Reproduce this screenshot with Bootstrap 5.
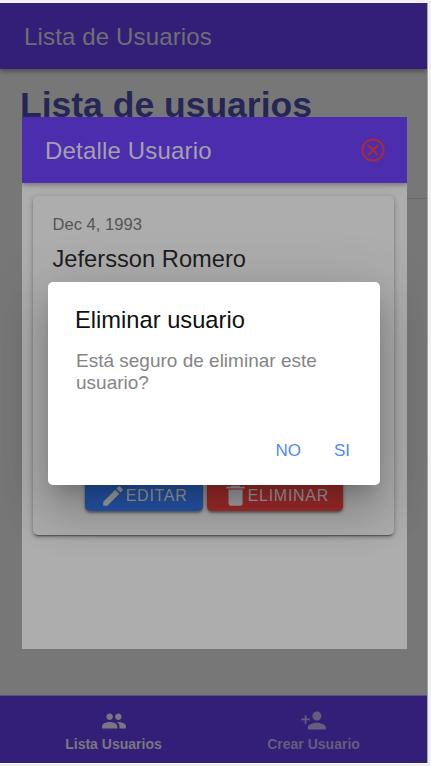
<!DOCTYPE html>
<html lang="es">
<head>
<meta charset="utf-8">
<meta name="viewport" content="width=device-width, initial-scale=1">
<title>Lista de Usuarios</title>
<link href="https://cdn.jsdelivr.net/npm/bootstrap@5.3.0/dist/css/bootstrap.min.css" rel="stylesheet">
<style>
html,body{height:766px;overflow:hidden}
body{background:#f1f1f2;font-family:"Liberation Sans",Arial,sans-serif;line-height:1}
.device{width:428px;height:760px;margin-top:3px;background:#777;overflow:hidden;border-right:1px solid #a3a3a8}
.base-line{height:3px;background:#f0edf5;border-top:1px solid #fff;width:428px}
.app-bar{height:66px;background:#341f78;color:#706e74;padding:1px 24px 0;font-size:24px;letter-spacing:.15px;box-shadow:0 2px 5px rgba(0,0,0,.38);flex:none}
.page-title{font-size:35.5px;font-weight:700;color:#262656;line-height:42px;margin:15px 0 0 20px;white-space:nowrap}
.rule{margin:72px 0 0 30px;border-top:1px solid #686868}
.tab-bar{height:68px;background:#341f78;border-top:1px solid #5b5180;flex:none}
.tab-item{width:200px;color:#7a7780;font-size:14px;font-weight:700;letter-spacing:.01px;padding-top:12px}
.tab-item.idle{color:#655d7c}
.tab-item svg{width:26px;height:26px;margin-bottom:3px}
.tab-item.idle svg{width:27px;height:27px;margin:-1px 0 3px}
.detail{left:22px;top:114px;width:385px;height:532px;background:#adadad;overflow:hidden}
.detail .detail-bar{height:66px;background:#4c2dae;color:#a4a1ac;padding:1px 20px 0 23px;font-size:24px;letter-spacing:.18px;box-shadow:0 2px 5px rgba(0,0,0,.32);flex:none}
.detail-bar svg{width:26px;height:26px;margin:-2px 1px 0 0}
.user-card{margin:13px 13px 0 11px;height:339px;border-radius:5px;background:#adadad;box-shadow:0 3px 1px -2px rgba(0,0,0,.3),0 2px 3px rgba(0,0,0,.22),0 1px 6px rgba(0,0,0,.2);padding:20px 19px 24px 19.500px}
.born{font-size:16.6px;line-height:20px;color:#555;margin-top:-1px}
.user-name{font-size:23.7px;line-height:28px;color:#1e1e1e;margin-top:10px;margin-bottom:0;font-weight:400}
.action{height:43px;border-radius:5px;padding:12px 12px 0 15px;font-size:16px;letter-spacing:.7px;color:#a4a4a6!important;border:0;box-shadow:0 2px 2px rgba(0,0,0,.28),0 1px 4px rgba(0,0,0,.3);line-height:1}
.action svg{width:26px;height:26px;flex:none}
.edit{background:#2657ac!important;width:118px}
.remove{background:#a32c2c!important;width:136px}
.confirm{left:47.500px;top:278.500px;width:332px;height:203px;border-radius:5px;background:#fff;box-shadow:0 13px 18px -8px rgba(0,0,0,.2),0 29px 45px 4px rgba(0,0,0,.14),0 11px 55px 10px rgba(0,0,0,.12);padding:24px 27.500px 0}
.confirm h2{font-size:23.7px;line-height:28px;margin:0;color:#111;font-weight:400}
.confirm p{font-size:19px;line-height:22px;margin:16.400px 0 0 1px;color:#858585}
.confirm .choice{font-size:17px;line-height:20px;color:#5089f8;padding:0;border:0}
.choices{gap:33px;margin-top:47px;padding-right:2px}
</style>
</head>
<body>
<div class="device position-relative d-flex flex-column">
  <header class="app-bar d-flex align-items-center">Lista de Usuarios</header>
  <main class="flex-grow-1">
    <h1 class="page-title">Lista de usuarios</h1>
    <div class="rule"></div>
  </main>
  <nav class="tab-bar d-flex justify-content-center">
    <div class="tab-item d-flex flex-column align-items-center">
      <svg viewBox="0 0 24 24" fill="currentColor"><path d="M16 11c1.66 0 2.99-1.34 2.99-3S17.66 5 16 5s-3 1.34-3 3 1.34 3 3 3zm-8 0c1.66 0 2.99-1.34 2.99-3S9.66 5 8 5 5 6.34 5 8s1.34 3 3 3zm0 2c-2.33 0-7 1.17-7 3.5V19h14v-2.500C15 14.170 10.330 13 8 13zm8 0c-.29 0-.62.020-.97.050C16.190 13.890 17 15.020 17 16.500V19h6v-2.500c0-2.330-4.670-3.500-7-3.500z"/></svg>
      <span>Lista Usuarios</span>
    </div>
    <div class="tab-item idle d-flex flex-column align-items-center">
      <svg viewBox="0 0 24 24" fill="currentColor"><path d="M15 12c2.210 0 4-1.790 4-4s-1.790-4-4-4-4 1.790-4 4 1.790 4 4 4zM5.700 10.300V7.300H4.200v3H1.200v1.500h3v3h1.500v-3h3v-1.500zM15 14c-2.670 0-8 1.340-8 4v2h16v-2c0-2.660-5.330-4-8-4z"/></svg>
      <span>Crear Usuario</span>
    </div>
  </nav>

  <section class="detail position-absolute d-flex flex-column">
    <div class="detail-bar d-flex align-items-center justify-content-between">
      <span>Detalle Usuario</span>
      <svg viewBox="0 0 26 26" fill="none" stroke="#a42c3b" stroke-width="2"><circle cx="13" cy="13" r="10.600"/><path d="M8 8l10 10M18 8L8 18" stroke-width="2.300"/></svg>
    </div>
    <article class="user-card d-flex flex-column">
      <div class="born">Dec 4, 1993</div>
      <h2 class="user-name">Jefersson Romero</h2>
      <div class="d-flex justify-content-center gap-1 mt-auto">
        <button class="btn action edit d-flex align-items-center" type="button">
          <svg viewBox="0 0 24 24" fill="currentColor"><path d="M3 17.250V21h3.750L17.810 9.940l-3.750-3.750L3 17.250zM20.710 7.040a1 1 0 0 0 0-1.410l-2.340-2.340a1 1 0 0 0-1.410 0l-1.830 1.830 3.750 3.750 1.830-1.830z"/></svg>EDITAR</button>
        <button class="btn action remove d-flex align-items-center" type="button">
          <svg viewBox="0 0 24 24" fill="currentColor"><path d="M6 18.900c0 1.100.9 2 2 2h9c1.100 0 2-.9 2-2V6H6v12.900zM21 3.500h-4l-1-1H9l-1 1H4v1.500h17v-1.500z"/></svg>ELIMINAR</button>
      </div>
    </article>
  </section>

  <section class="confirm position-absolute" role="alertdialog">
    <h2>Eliminar usuario</h2>
    <p>Está seguro de eliminar este<br>usuario?</p>
    <div class="choices d-flex justify-content-end">
      <button class="btn choice" type="button">NO</button>
      <button class="btn choice" type="button">SI</button>
    </div>
  </section>
</div>
<div class="base-line"></div>
<script src="https://cdn.jsdelivr.net/npm/bootstrap@5.3.0/dist/js/bootstrap.bundle.min.js"></script>
</body>
</html>
